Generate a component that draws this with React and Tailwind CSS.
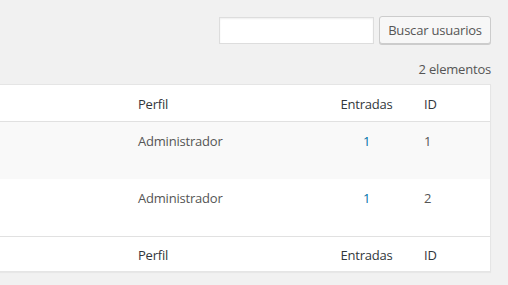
import React from 'react'

const rows = [
    { role: 'Administrador', posts: '1', id: '1', alt: true },
    { role: 'Administrador', posts: '1', id: '2', alt: false },
]

const HeadRow = ({ className }) => (
    <div className={`grid grid-cols-[128px_201px_75px_87px] items-center text-[#32373c] ${className || ''}`}>
        <div />
        <div className="pl-[10px]">Perfil</div>
        <div className="text-center">Entradas</div>
        <div className="pl-[20px]">ID</div>
    </div>
)

export default function App() {
    return (
        <div
            className="w-[508px] h-[285px] bg-[#f1f1f1] text-[13px] tracking-[-0.2px] text-[#555] overflow-hidden"
            style={{ fontFamily: '"Open Sans", "Noto Sans", sans-serif' }}
        >
            <div className="flex justify-end gap-[5px] pt-[16px] pr-[17px]">
                <input
                    type="text"
                    className="w-[155px] h-[27px] mt-[1px] bg-white border border-[#ddd] shadow-[inset_0_1px_2px_rgba(0,0,0,0.07)] outline-none"
                />
                <button className="h-[28px] w-[112px] bg-[#f7f7f7] border border-[#ccc] rounded-[3px] shadow-[0_1px_0_#ccc] text-[#555] leading-none">
                    Buscar usuarios
                </button>
            </div>
            <div className="flex justify-end pr-[17px] mt-[15px] h-[20px] leading-[20px]">2 elementos</div>
            <div className="mr-[17px] mt-[5px] bg-white border-y border-r border-[#e5e5e5] shadow-[0_1px_1px_rgba(0,0,0,0.04)]">
                <HeadRow className="border-b border-[#e1e1e1] h-[37px] pt-[4px]" />
                {rows.map((r, i) => (
                    <div
                        key={i}
                        className={`grid grid-cols-[128px_201px_75px_87px] h-[57px] pt-[9px] leading-[20px] ${r.alt ? 'bg-[#f9f9f9]' : 'bg-white'}`}
                    >
                        <div />
                        <div className="pl-[10px]">{r.role}</div>
                        <div className="text-center text-[#0073aa]">{r.posts}</div>
                        <div className="pl-[20px]">{r.id}</div>
                    </div>
                ))}
                <HeadRow className="border-t border-[#e1e1e1] h-[35px] pt-[3px]" />
            </div>
        </div>
    )
}
